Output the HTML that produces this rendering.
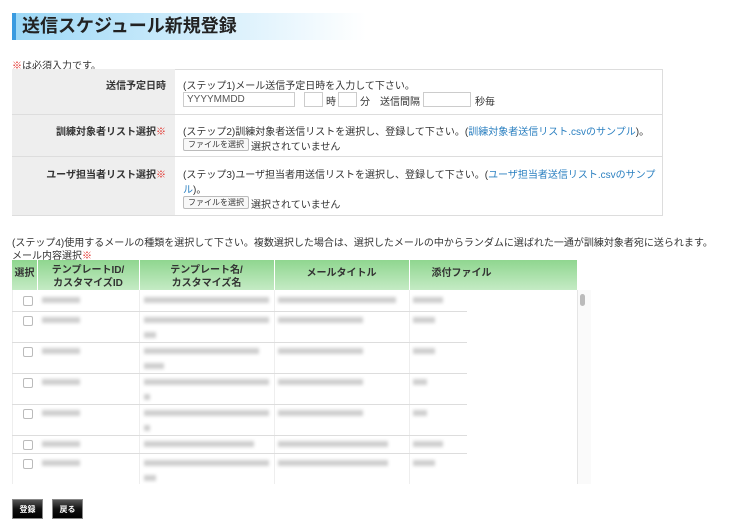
<html><head><style>
body{margin:0;width:745px;height:529px;background:#fff;font-family:"Liberation Sans","Noto Sans CJK JP",sans-serif;font-size:10px;color:#333;position:relative;overflow:hidden}
.a{position:absolute;white-space:nowrap}
.red{color:#e0201a}
a{color:#2a7fc0;text-decoration:none}
.inp{position:absolute;height:15px;border:1px solid #ccc;background:#fff;box-sizing:border-box;font-size:10px;color:#555;padding-left:3px;line-height:13px}
.fbtn{position:absolute;height:13px;border:1px solid #bbb;border-radius:2px;background:#f8f8f8;font-size:8px;line-height:12px;padding:0 4px;box-sizing:border-box}
.lbl{position:absolute;left:12px;width:163px;background:#eee;border-bottom:1px solid #ddd;box-sizing:border-box}
.bl{position:absolute;height:6px;background:#bbb;filter:blur(1.5px);opacity:.7}
.cb{position:absolute;left:23px;width:8px;height:8px;border:1px solid #bbb;border-radius:2px;background:#fff}
.btn{position:absolute;top:499px;width:31px;height:20px;background:linear-gradient(#555,#111 50%,#000);border:1px solid #888;box-sizing:border-box;color:#fff;font-weight:bold;font-size:8px;text-align:center;line-height:19px}
.rl{position:absolute;left:12px;width:455px;border-top:1px solid #ddd}
</style></head><body>
<div class="a" style="left:12px;top:13px;width:350px;height:27px;background:linear-gradient(90deg,#9dd8f6,#d9f0fc 60%,#fff);border-left:4px solid #3a9be0"></div>
<div class="a" style="left:22px;top:14px;font-size:18px;font-weight:bold;color:#222;line-height:25px">送信スケジュール新規登録</div>
<div class="a" style="left:12px;top:57px"><span class="red">※</span>は必須入力です。</div>
<div class="a" style="left:12px;top:69px;width:651px;height:147px;border:1px solid #ddd;box-sizing:border-box"></div>
<div class="lbl" style="top:69px;height:46px"></div>
<div class="lbl" style="top:115px;height:42px"></div>
<div class="lbl" style="top:157px;height:59px"></div>
<div class="a" style="left:175px;top:114px;width:488px;border-top:1px solid #ddd"></div>
<div class="a" style="left:175px;top:156px;width:488px;border-top:1px solid #ddd"></div>
<div class="a" style="right:579px;top:77px;font-weight:bold">送信予定日時</div>
<div class="a" style="right:579px;top:123px;font-weight:bold">訓練対象者リスト選択<span class="red">※</span></div>
<div class="a" style="right:579px;top:166px;font-weight:bold">ユーザ担当者リスト選択<span class="red">※</span></div>
<div class="a" style="left:183px;top:77px">(ステップ1)メール送信予定日時を入力して下さい。</div>
<div class="inp" style="left:183px;top:92px;width:112px">YYYYMMDD</div>
<div class="inp" style="left:304px;top:92px;width:19px"></div><div class="a" style="left:326px;top:93px">時</div>
<div class="inp" style="left:338px;top:92px;width:19px"></div><div class="a" style="left:360px;top:93px">分　送信間隔</div>
<div class="inp" style="left:423px;top:92px;width:48px"></div><div class="a" style="left:475px;top:93px">秒毎</div>
<div class="a" style="left:183px;top:123px">(ステップ2)訓練対象者送信リストを選択し、登録して下さい。(<a>訓練対象者送信リスト.csvのサンプル</a>)。</div>
<div class="fbtn" style="left:183px;top:138px">ファイルを選択</div><div class="a" style="left:251px;top:138px">選択されていません</div>
<div class="a" style="left:183px;top:166px">(ステップ3)ユーザ担当者用送信リストを選択し、登録して下さい。(<a>ユーザ担当者送信リスト.csvのサンプ</a></div>
<div class="a" style="left:183px;top:181px"><a>ル</a>)。</div>
<div class="fbtn" style="left:183px;top:196px">ファイルを選択</div><div class="a" style="left:251px;top:196px">選択されていません</div>
<div class="a" style="left:12px;top:234px">(ステップ4)使用するメールの種類を選択して下さい。複数選択した場合は、選択したメールの中からランダムに選ばれた一通が訓練対象者宛に送られます。</div>
<div class="a" style="left:12px;top:247px">メール内容選択<span class="red">※</span></div>
<div class="a" style="left:12px;top:260px;width:565px;height:30px;background:linear-gradient(#8fd68f,#c5ebc5)"></div>
<div class="a" style="left:37px;top:260px;height:30px;border-left:1px solid #fff"></div>
<div class="a" style="left:139px;top:260px;height:30px;border-left:1px solid #fff"></div>
<div class="a" style="left:274px;top:260px;height:30px;border-left:1px solid #fff"></div>
<div class="a" style="left:409px;top:260px;height:30px;border-left:1px solid #fff"></div>
<div class="a" style="left:12px;top:264px;width:25px;text-align:center;font-weight:bold">選択</div>
<div class="a" style="left:37px;top:264px;width:102px;text-align:center;font-weight:bold;line-height:13px">テンプレートID/<br>カスタマイズID</div>
<div class="a" style="left:139px;top:264px;width:135px;text-align:center;font-weight:bold;line-height:13px">テンプレート名/<br>カスタマイズ名</div>
<div class="a" style="left:274px;top:264px;width:135px;text-align:center;font-weight:bold">メールタイトル</div>
<div class="a" style="left:409px;top:264px;width:105px;text-align:center;font-weight:bold">添付ファイル</div>
<div class="a" style="left:12px;top:290px;width:565px;height:194px;border-left:1px solid #eee;box-sizing:border-box"></div>
<div class="a" style="left:139px;top:290px;height:194px;border-left:1px solid #eee"></div>
<div class="a" style="left:274px;top:290px;height:194px;border-left:1px solid #eee"></div>
<div class="a" style="left:409px;top:290px;height:194px;border-left:1px solid #eee"></div>
<div class="a" style="left:577px;top:290px;width:13px;height:194px;background:#fafafa;border-left:1px solid #e5e5e5"></div>
<div class="a" style="left:580px;top:294px;width:5px;height:12px;background:#bbb;border-radius:3px"></div>
<div class="rl" style="top:311px"></div><div class="rl" style="top:342px"></div><div class="rl" style="top:373px"></div><div class="rl" style="top:404px"></div><div class="rl" style="top:435px"></div><div class="rl" style="top:453px"></div>
<div class="cb" style="top:296px"></div><div class="cb" style="top:316px"></div><div class="cb" style="top:347px"></div><div class="cb" style="top:378px"></div><div class="cb" style="top:409px"></div><div class="cb" style="top:440px"></div><div class="cb" style="top:459px"></div>
<div class="bl" style="left:42px;top:297px;width:38px"></div><div class="bl" style="left:144px;top:297px;width:125px"></div><div class="bl" style="left:278px;top:297px;width:118px"></div><div class="bl" style="left:413px;top:297px;width:30px"></div>
<div class="bl" style="left:42px;top:317px;width:38px"></div><div class="bl" style="left:144px;top:317px;width:125px"></div><div class="bl" style="left:144px;top:332px;width:12px"></div><div class="bl" style="left:278px;top:317px;width:85px"></div><div class="bl" style="left:413px;top:317px;width:22px"></div>
<div class="bl" style="left:42px;top:348px;width:38px"></div><div class="bl" style="left:144px;top:348px;width:115px"></div><div class="bl" style="left:144px;top:363px;width:20px"></div><div class="bl" style="left:278px;top:348px;width:85px"></div><div class="bl" style="left:413px;top:348px;width:22px"></div>
<div class="bl" style="left:42px;top:379px;width:38px"></div><div class="bl" style="left:144px;top:379px;width:125px"></div><div class="bl" style="left:144px;top:394px;width:6px"></div><div class="bl" style="left:278px;top:379px;width:85px"></div><div class="bl" style="left:413px;top:379px;width:14px"></div>
<div class="bl" style="left:42px;top:410px;width:38px"></div><div class="bl" style="left:144px;top:410px;width:125px"></div><div class="bl" style="left:144px;top:425px;width:6px"></div><div class="bl" style="left:278px;top:410px;width:85px"></div><div class="bl" style="left:413px;top:410px;width:14px"></div>
<div class="bl" style="left:42px;top:441px;width:38px"></div><div class="bl" style="left:144px;top:441px;width:110px"></div><div class="bl" style="left:278px;top:441px;width:110px"></div><div class="bl" style="left:413px;top:441px;width:30px"></div>
<div class="bl" style="left:42px;top:460px;width:38px"></div><div class="bl" style="left:144px;top:460px;width:125px"></div><div class="bl" style="left:144px;top:475px;width:12px"></div><div class="bl" style="left:278px;top:460px;width:110px"></div><div class="bl" style="left:413px;top:460px;width:22px"></div>
<div class="btn" style="left:12px">登録</div><div class="btn" style="left:52px">戻る</div>
</body></html>
